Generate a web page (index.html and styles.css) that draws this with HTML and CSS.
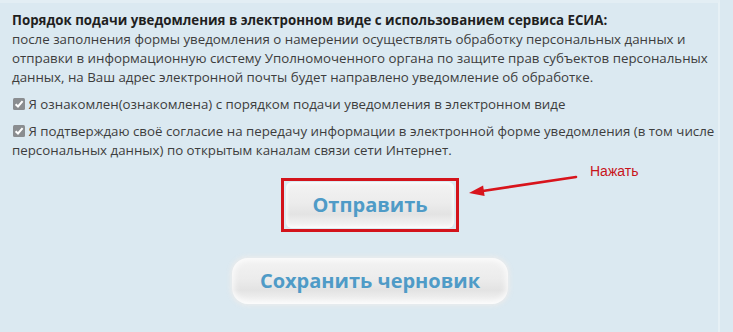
FILE: index.html
```html
<!DOCTYPE html>
<html lang="ru">
<head>
<meta charset="utf-8">
<title>Порядок подачи уведомления</title>
<link rel="stylesheet" href="styles.css">
</head>
<body>
<div class="panel">
  <div class="info">
    <p class="lead"><b class="title">Порядок подачи уведомления в электронном виде с использованием сервиса ЕСИА:</b><br>после заполнения формы уведомления о намерении осуществлять обработку персональных данных и<br>отправки в информационную систему Уполномоченного органа по защите прав субъектов персональных<br>данных, на Ваш адрес электронной почты будет направлено уведомление об обработке.</p>
    <p class="check"><span class="box"><svg viewBox="0 0 12 12" width="12" height="12"><rect x="0" y="0" width="12" height="12" rx="1.5" fill="#8a8d90"/><path d="M2.6 6.2 L5 8.5 L9.6 3.2" fill="none" stroke="#fff" stroke-width="2"/></svg></span> Я ознакомлен(ознакомлена) с порядком подачи уведомления в электронном виде</p>
    <p class="check"><span class="box"><svg viewBox="0 0 12 12" width="12" height="12"><rect x="0" y="0" width="12" height="12" rx="1.5" fill="#8a8d90"/><path d="M2.6 6.2 L5 8.5 L9.6 3.2" fill="none" stroke="#fff" stroke-width="2"/></svg></span> Я подтверждаю своё согласие на передачу информации в электронной форме уведомления (в том числе<br>персональных данных) по открытым каналам связи сети Интернет.</p>
  </div>
  <div class="actions">
    <div class="send-row">
      <div class="highlight"><button class="btn btn-send" type="button">Отправить</button></div>
      <svg class="arrow" width="115" height="26" viewBox="0 0 115 26"><line x1="109" y1="5" x2="14" y2="19.2" stroke="#d8141c" stroke-width="2.6" stroke-linecap="round"/><polygon points="2,21 17.6,24 16.1,13.6" fill="#d8141c"/></svg>
      <span class="note">Нажать</span>
    </div>
    <button class="btn btn-draft" type="button">Сохранить черновик</button>
  </div>
</div>
</body>
</html>
```

FILE: styles.css
```css
* { box-sizing: border-box; }
html, body { margin: 0; padding: 0; }
body {
  background: #dbe9f1;
  width: 733px;
  height: 332px;
  overflow: hidden;
  font-family: "Open Sans", "Noto Sans", sans-serif;
}
.panel {
  width: 720px;
  height: 332px;
  border-top: 3px solid #e3eef4;
  border-right: 2px solid #e6f0f5;
  padding: 8px 0 0 12px;
}
.info p {
  margin: 0 0 8px 0;
  font-size: 13.3px;
  line-height: 19px;
  color: #3d3d3d;
}
.title {
  color: #1f1f1f;
  font-weight: 700;
}
.check .box {
  display: inline-block;
  width: 12px;
  height: 12px;
  vertical-align: -1px;
  margin-left: 1px;
}
.check .box svg { display: block; }
.actions {
  display: flex;
  flex-direction: column;
  align-items: center;
  padding-left: 10px;
  margin-top: 18px;
}
.send-row {
  position: relative;
}
.highlight {
  border: 3px solid #d3131b;
  padding: 1px 2px;
  width: 178px;
  height: 54px;
  display: flex;
}
.btn {
  font-family: "Open Sans", "Noto Sans", sans-serif;
  font-weight: 700;
  font-size: 20px;
  color: #4f9bc7;
  border: none;
  cursor: pointer;
  background: linear-gradient(to bottom, #f3f3f3 0%, #ececec 45%, #e3e3e3 70%, #f7f7f7 100%);
}
.btn-send {
  flex: 1;
  border-radius: 6px;
  box-shadow: 0 0 3px 2px rgba(255,255,255,0.6) inset;
  padding: 0 0 2px 0;
}
.btn-draft {
  margin-top: 26px;
  width: 276px;
  height: 46px;
  border-radius: 16px;
  box-shadow: 0 0 4px 2px rgba(235,235,235,0.9), 0 0 6px 2px rgba(255,255,255,0.8) inset;
  padding: 0 0 2px 0;
}
.arrow {
  position: absolute;
  left: 186px;
  top: -6px;
}
.note {
  position: absolute;
  left: 309px;
  top: -15px;
  font-family: "Liberation Sans", Arial, sans-serif;
  font-size: 14px;
  line-height: 16px;
  color: #c8141b;
  white-space: nowrap;
}
```
